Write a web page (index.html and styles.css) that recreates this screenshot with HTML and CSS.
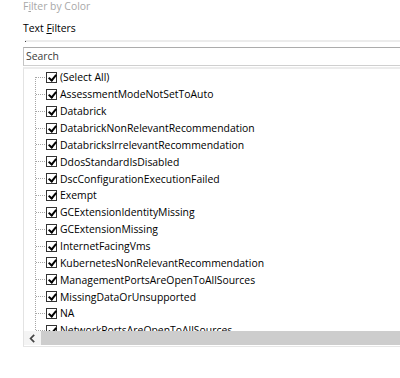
FILE: index.html
```html
<!DOCTYPE html>
<html lang="en">

<head>
  <meta charset="UTF-8">
  <meta name="viewport" content="width=device-width, initial-scale=1.0">
  <title>Filter</title>

  <link rel="stylesheet" href="styles.css">
</head>

<body>
  <div class="panel">
    <p class="menu-item disabled">F<u>i</u>lter by Color</p>
    <p class="menu-item">Text <u>F</u>ilters</p>
    <div class="sep"><span class="sep-dot"></span></div>
    <div class="search">Search</div>
    <div class="list-box">
      <ul class="tree">
        <li><span class="chk"></span>(Select All)</li>
        <li><span class="chk"></span>AssessmentModeNotSetToAuto</li>
        <li><span class="chk"></span>Databrick</li>
        <li><span class="chk"></span>DatabrickNonRelevantRecommendation</li>
        <li><span class="chk"></span>DatabricksIrrelevantRecommendation</li>
        <li><span class="chk"></span>DdosStandardIsDisabled</li>
        <li><span class="chk"></span>DscConfigurationExecutionFailed</li>
        <li><span class="chk"></span>Exempt</li>
        <li><span class="chk"></span>GCExtensionIdentityMissing</li>
        <li><span class="chk"></span>GCExtensionMissing</li>
        <li><span class="chk"></span>InternetFacingVms</li>
        <li><span class="chk"></span>KubernetesNonRelevantRecommendation</li>
        <li><span class="chk"></span>ManagementPortsAreOpenToAllSources</li>
        <li><span class="chk"></span>MissingDataOrUnsupported</li>
        <li><span class="chk"></span>NA</li>
        <li><span class="chk"></span>NetworkPortsAreOpenToAllSources</li>
      </ul>
      <div class="hscroll">
        <div class="arrow">
          <svg width="7" height="9" viewBox="0 0 7 9"><path d="M5.2 0.8 L1.6 4.5 L5.2 8.2" fill="none" stroke="#444" stroke-width="1.7"/></svg>
        </div>
        <div class="thumb"></div>
      </div>
    </div>
  </div>
</body>

</html>
```

FILE: styles.css
```css
* {
  margin: 0;
  padding: 0;
  box-sizing: border-box;
}

body {
  width: 400px;
  height: 378px;
  background: #fff;
  overflow: hidden;
  font-family: "Open Sans", "Noto Sans", sans-serif;
  font-size: 10.4px;
  color: #000;
}

.panel {
  padding-left: 23px;
}

.menu-item {
  height: 14px;
  line-height: 14px;
}

.menu-item.disabled {
  margin-top: -1px;
  color: #a8a8a8;
}

.menu-item + .menu-item {
  margin-top: 8px;
}

.menu-item u {
  text-decoration-thickness: 1px;
  text-underline-offset: 1px;
}

.sep {
  position: relative;
  height: 2px;
  margin-top: 5px;
  margin-left: 2px;
  background: #ececec;
}

.sep-dot {
  position: absolute;
  left: 0;
  top: 1px;
  width: 1px;
  height: 1px;
  background: #444;
}

.search {
  margin-top: 5px;
  height: 19px;
  padding-left: 2px;
  border-top: 1px solid #acacac;
  border-left: 1px solid #c4c4c4;
  border-bottom: 1px solid #cfcfcf;
  line-height: 17px;
  color: #3c3c3c;
}

.list-box {
  margin-top: 1px;
  border-top: 2px solid #ececec;
  border-left: 1px solid #e3e3e3;
  border-bottom: 1px solid #e6e6e6;
  padding-bottom: 1px;
}

.tree {
  list-style: none;
  height: 262px;
  overflow: hidden;
  padding-left: 11px;
  background-image: linear-gradient(#fff, #fff), repeating-linear-gradient(#a6a6a6 0 1px, transparent 1px 2px);
  background-size: 1px 8px, 1px 100%;
  background-repeat: no-repeat;
  background-position: 11px 0, 11px 0;
}

.tree li {
  position: relative;
  display: flex;
  align-items: center;
  height: 16.86px;
  white-space: nowrap;
  padding-left: 11px;
}

.tree li::before {
  content: "";
  position: absolute;
  left: 1px;
  top: 8px;
  width: 9px;
  height: 1px;
  background-image: repeating-linear-gradient(90deg, #a6a6a6 0 1px, transparent 1px 2px);
}

.chk {
  flex: 0 0 auto;
  width: 11px;
  height: 11px;
  margin-right: 3px;
  border: 1px solid #333;
  background: #fff;
  position: relative;
}

.chk::after {
  content: "";
  position: absolute;
  left: 3px;
  top: 0;
  width: 3px;
  height: 6px;
  border-right: 2px solid #000;
  border-bottom: 2px solid #000;
  transform: rotate(40deg);
}

.hscroll {
  display: flex;
  height: 14px;
}

.arrow {
  flex: 0 0 17px;
  display: flex;
  justify-content: center;
  align-items: center;
  background: #f4f4f4;
}

.thumb {
  flex: 1;
  background: #cdcdcd;
}
```
